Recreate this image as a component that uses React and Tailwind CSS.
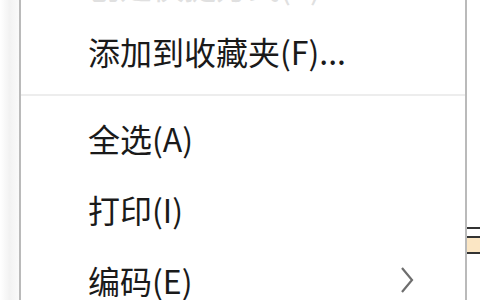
export default function App() {
  const font = { fontFamily: '"Noto Sans CJK SC", "Microsoft YaHei", sans-serif' }
  const items = [
    { label: '添加到收藏夹(F)...' },
    { separator: true },
    { label: '全选(A)' },
    { label: '打印(I)' },
    { label: '编码(E)', submenu: true },
  ]

  return (
    <div className="flex w-[480px] h-[300px] overflow-hidden bg-white" style={font}>
      <div className="w-[19px] shrink-0 bg-gradient-to-r from-white via-[#f2f2f2] to-[#fafafa]" />

      <div className="w-[448px] shrink-0 flex flex-col border-x-2 border-[#bababa] bg-white">
        <div className="h-[61px] -mt-[46px] shrink-0 flex items-center pl-[67px] text-[32px] text-[#e0e0e0]">
          创建快捷方式(T)
        </div>
        {items.map((item, index) =>
          item.separator ? (
            <div key={index} className="h-[16px] shrink-0 pt-[8px]">
              <div className="h-[2px] bg-[#ededed]" />
            </div>
          ) : (
            <div
              key={index}
              className="h-[71px] shrink-0 flex items-center justify-between pl-[67px] pr-[50px] text-[32px] text-[#1a1a1a]"
            >
              <span>{item.label}</span>
              {item.submenu && (
                <svg width="16" height="28" viewBox="0 0 16 28">
                  <polyline points="3,2 13,14 3,26" fill="none" stroke="#6e6e6e" strokeWidth="2.2" />
                </svg>
              )}
            </div>
          )
        )}
      </div>

      <div className="flex-1 flex flex-col">
        <div className="h-[2px] mt-[227px] bg-[#333]" />
        <div className="h-[2px] mt-[7px] bg-[#333]" />
        <div className="h-[14px] bg-[#fbe6c4]" />
        <div className="h-[2px] bg-[#333]" />
      </div>
    </div>
  )
}
